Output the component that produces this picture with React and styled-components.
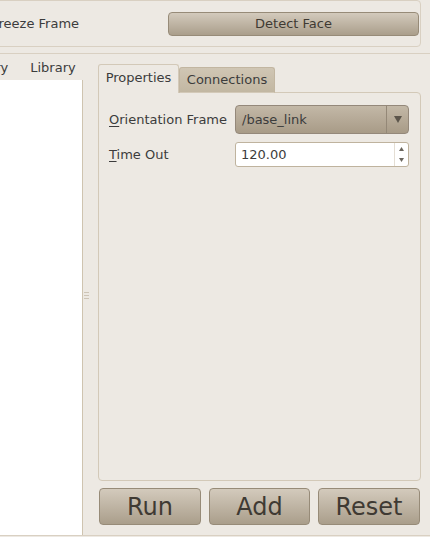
import React from "react";
import styled, { createGlobalStyle } from "styled-components";

const Global = createGlobalStyle`
  html, body { margin: 0; padding: 0; background: #EDE9E3; }
  body { font-family: "DejaVu Sans", "Liberation Sans", sans-serif; font-size: 13px; color: #3C3C3C; }
`;

const Window = styled.div`
  width: 430px;
  height: 537px;
  overflow: hidden;
  background: #EDE9E3;
  display: flex;
  flex-direction: column;
`;

const TopFrame = styled.div`
  box-sizing: border-box;
  height: 47px;
  margin: 0 9px 0 -20px;
  border: 1px solid #D9D0C2;
  border-radius: 4px;
  display: flex;
  align-items: center;
  padding: 0 1px 0 11px;
`;

const FrameLabel = styled.span`
  white-space: nowrap;
`;

const GradButton = styled.button`
  box-sizing: border-box;
  font-family: "DejaVu Sans", "Liberation Sans", sans-serif;
  color: #3F3A33;
  background: linear-gradient(#D3CABC, #AA9E8B);
  border: 1px solid #978B78;
  border-radius: 4px;
  padding: 0;
  display: flex;
  align-items: center;
  justify-content: center;
  width: ${(p) => p.$w}px;
  height: ${(p) => p.$h}px;
  font-size: ${(p) => p.$fs}px;
  flex: none;
`;

const Spacer = styled.div`
  flex: 1;
`;

const LowerFrame = styled.div`
  box-sizing: border-box;
  margin-top: 6px;
  height: 483px;
  border-top: 1px solid #D9D0C2;
  border-bottom: 1px solid #D9D0C2;
  display: flex;
`;

const LeftPane = styled.div`
  margin-left: -40px;
  width: 123px;
  display: flex;
  flex-direction: column;
  flex: none;
`;

const SideTabs = styled.div`
  height: 26px;
  display: flex;
  align-items: center;
  gap: 22px;
  padding-left: 2px;
  white-space: nowrap;
`;

const ListBox = styled.div`
  flex: 1;
  background: #FFFFFF;
  border-right: 1px solid #CFC4B0;
`;

const Splitter = styled.div`
  width: 15px;
  flex: none;
  display: flex;
  flex-direction: column;
  justify-content: center;
  gap: 2px;
  padding-left: 1px;
  box-sizing: border-box;
  padding-top: 2px;
`;

const Grip = styled.div`
  width: 5px;
  height: 1px;
  background: #CDC4B6;
`;

const RightPane = styled.div`
  width: 323px;
  flex: none;
  display: flex;
  flex-direction: column;
  padding-top: 10px;
`;

const TabBar = styled.div`
  display: flex;
  align-items: flex-end;
  height: 29px;
  margin-bottom: -1px;
  position: relative;
  z-index: 1;
`;

const Tab = styled.div`
  box-sizing: border-box;
  height: ${(p) => (p.$active ? 29 : 26)}px;
  width: ${(p) => p.$w}px;
  display: flex;
  align-items: center;
  justify-content: center;
  border: 1px solid ${(p) => (p.$active ? "#D3C9B8" : "#C2B6A1")};
  border-bottom: ${(p) => (p.$active ? "none" : "1px solid #D3C9B8")};
  border-radius: 3px 3px 0 0;
  background: ${(p) => (p.$active ? "#EDE9E3" : "linear-gradient(#D0C6B4, #C2B7A2)")};
  padding-bottom: ${(p) => (p.$active ? 3 : 1)}px;
`;

const Pane = styled.div`
  box-sizing: border-box;
  height: 389px;
  border: 1px solid #D3C9B8;
  border-radius: 0 4px 4px 4px;
  padding: 12px 11px 0 10px;
  display: flex;
  flex-direction: column;
  gap: 8px;
`;

const FieldRow = styled.div`
  display: flex;
  align-items: center;
`;

const FieldLabel = styled.span`
  width: 126px;
  flex: none;
  & u { text-decoration: underline; text-underline-offset: 2px; }
`;

const Combo = styled.div`
  box-sizing: border-box;
  width: 174px;
  height: 29px;
  border: 1px solid #94887A;
  border-radius: 4px;
  background: linear-gradient(#C3B8A7, #A89B87);
  display: flex;
  align-items: center;
`;

const ComboText = styled.span`
  flex: 1;
  padding-left: 6px;
`;

const ComboArrow = styled.div`
  width: 21px;
  height: 100%;
  border-left: 1px solid #948877;
  display: flex;
  align-items: center;
  justify-content: center;
`;

const Spin = styled.div`
  box-sizing: border-box;
  width: 174px;
  height: 25px;
  border: 1px solid #BFB39E;
  border-radius: 3px;
  background: #FFFFFF;
  display: flex;
  align-items: center;
`;

const SpinText = styled.span`
  flex: 1;
  padding-left: 5px;
`;

const SpinButtons = styled.div`
  width: 14px;
  height: 100%;
  border-left: 1px solid #E4DED4;
  display: flex;
  flex-direction: column;
  align-items: center;
  justify-content: space-between;
  padding: 4px 0 4px;
  box-sizing: border-box;
`;

const ButtonRow = styled.div`
  display: flex;
  gap: 8px;
  margin-top: 7px;
  padding-left: 1px;
`;

const Tri = ({ dir = "down", w = 7, h = 6, color = "#5A5248" }) => (
  <svg width={w} height={h} viewBox={`0 0 ${w} ${h}`}>
    {dir === "down" ? (
      <polygon points={`0,0 ${w},0 ${w / 2},${h}`} fill={color} />
    ) : (
      <polygon points={`0,${h} ${w},${h} ${w / 2},0`} fill={color} />
    )}
  </svg>
);

export default function App() {
  return (
    <>
      <Global />
      <Window>
        <TopFrame>
          <FrameLabel>Freeze Frame</FrameLabel>
          <Spacer />
          <GradButton $w={251} $h={24} $fs={13}>Detect Face</GradButton>
        </TopFrame>
        <LowerFrame>
          <LeftPane>
            <SideTabs>
              <span>History</span>
              <span>Library</span>
            </SideTabs>
            <ListBox />
          </LeftPane>
          <Splitter>
            <Grip />
            <Grip />
            <Grip />
          </Splitter>
          <RightPane>
            <TabBar>
              <Tab $active $w={81}>Properties</Tab>
              <Tab $w={96}>Connections</Tab>
            </TabBar>
            <Pane>
              <FieldRow>
                <FieldLabel><u>O</u>rientation Frame</FieldLabel>
                <Combo>
                  <ComboText>/base_link</ComboText>
                  <ComboArrow>
                    <Tri dir="down" w={8} h={7} color="#5C554B" />
                  </ComboArrow>
                </Combo>
              </FieldRow>
              <FieldRow>
                <FieldLabel><u>T</u>ime Out</FieldLabel>
                <Spin>
                  <SpinText>120.00</SpinText>
                  <SpinButtons>
                    <Tri dir="up" w={5} h={4} color="#6A655D" />
                    <Tri dir="down" w={5} h={4} color="#6A655D" />
                  </SpinButtons>
                </Spin>
              </FieldRow>
            </Pane>
            <ButtonRow>
              <GradButton $w={102} $h={37} $fs={24}>Run</GradButton>
              <GradButton $w={101} $h={37} $fs={24}>Add</GradButton>
              <GradButton $w={102} $h={37} $fs={24}>Reset</GradButton>
            </ButtonRow>
          </RightPane>
        </LowerFrame>
      </Window>
    </>
  );
}
